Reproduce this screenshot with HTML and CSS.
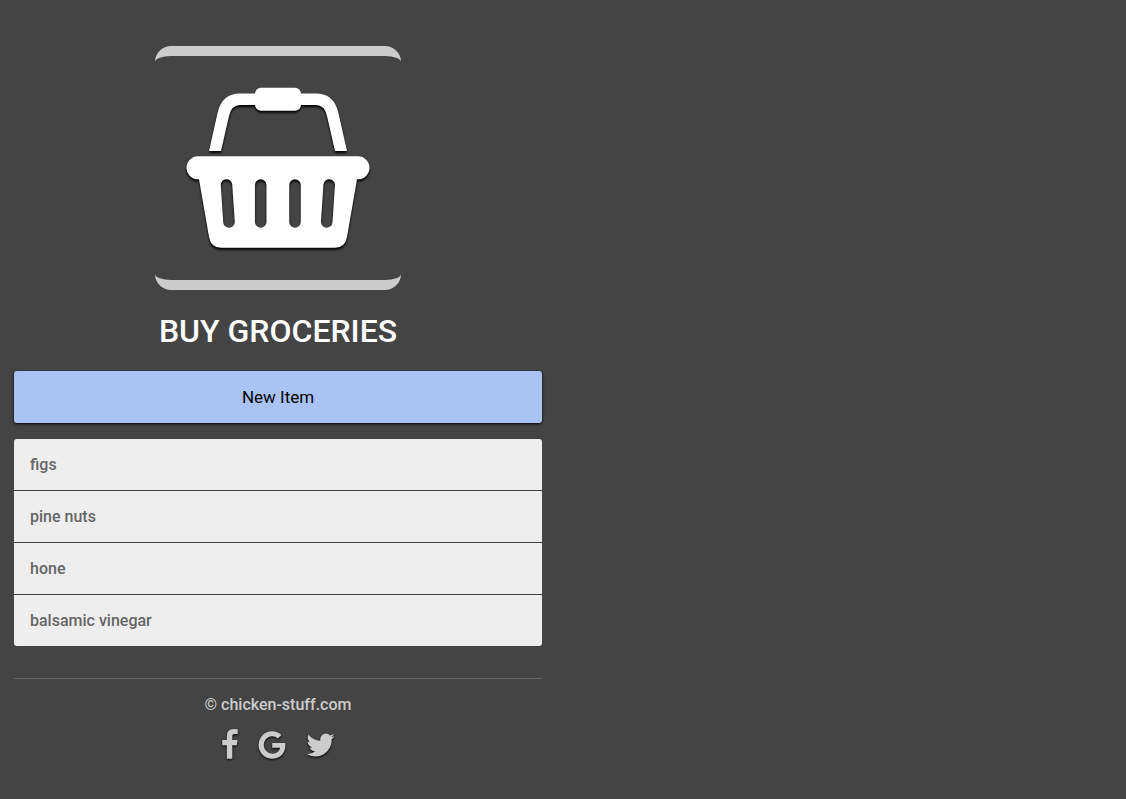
FILE: index.html
```html
<!DOCTYPE html>
<html lang="en">
<head>
<meta charset="utf-8">
<meta name="viewport" content="width=device-width, initial-scale=1">
<title>Buy Groceries</title>
<link rel="stylesheet" href="styles.css">
</head>
<body>
<div class="page">
  <header class="header">
    <div class="logo">
      <svg class="basket" viewBox="186 86 184 164" role="img" aria-label="Shopping basket">
        <mask id="slots" maskUnits="userSpaceOnUse" x="186" y="86" width="184" height="164">
          <rect x="186" y="86" width="184" height="164" fill="#fff"/>
          <path d="M226.500 185L229 222M260.700 185V222M295 185V222M329.200 185L326.700 222" stroke="#000" stroke-width="11.500" stroke-linecap="round"/>
        </mask>
        <g fill="#fff">
          <path d="M209 151L217.800 112Q222.500 93.500 240 93.500H316Q333.500 93.500 338.200 112L347 151H335L327 116Q324.500 105 316 105H240Q231.500 105 229 116L221 151Z"/>
          <rect x="255" y="87.700" width="46" height="23" rx="6"/>
          <path mask="url(#slots)" d="M198 156.300H358A11.500 11.500 0 0 1 358 179.300H357L347 237Q345 247.800 335 247.800H221Q211 247.800 209 237L199 179.300H198A11.500 11.500 0 0 1 198 156.300Z"/>
        </g>
      </svg>
    </div>
    <h1 class="title">BUY GROCERIES</h1>
  </header>
  <main>
    <button class="new-item" type="button">New Item</button>
    <ul class="items">
      <li class="item">figs</li>
      <li class="item">pine nuts</li>
      <li class="item">hone</li>
      <li class="item">balsamic vinegar</li>
    </ul>
  </main>
  <footer class="footer">
    <a class="copyright" href="#">© chicken-stuff.com</a>
    <nav class="social" aria-label="Social media">
      <a class="social-link" href="#" aria-label="Facebook"><svg class="icon" viewBox="464 0 896 1792"><path d="M1343 12v264h-157q-86 0-116 36t-30 108v189h293l-39 296h-254v759h-306v-759h-255v-296h255v-218q0-186 104-288.500t277-102.500q147 0 228 12z"/></svg></a>
      <a class="social-link" href="#" aria-label="Google"><svg class="icon" viewBox="98 0 1568 1792"><path d="M896 786h725q12 67 12 128 0 217-91 387.500t-259.500 266.500-386.500 96q-157 0-299-60.500t-245-163.500-163.500-245-60.500-299 60.500-299 163.500-245 245-163.500 299-60.500q300 0 515 201l-209 201q-123-119-306-119-129 0-238.500 65t-173.500 176.500-64 243.500 64 243.500 173.500 176.500 238.500 65q87 0 160-24t120-60 82-82 51.500-87 22.500-78h-436v-264z"/></svg></a>
      <a class="social-link" href="#" aria-label="Twitter"><svg class="icon" viewBox="84 0 1568 1792"><path d="M1684 408q-67 98-162 167 1 14 1 42 0 130-38 259.500t-115.500 248.500-184.500 210.500-258 146-323 54.500q-271 0-491-145 35 4 78 4 225 0 401-138-105-2-188-64.500t-114-159.500q33 5 61 5 43 0 85-11-112-23-185.500-111.500t-73.500-205.500v-4q68 38 146 41-66-44-105-115t-39-154q0-88 44-163 121 149 294.500 238.500t371.500 99.500q-8-38-8-74 0-134 94.500-228.500t228.500-94.500q140 0 236 102 109-21 205-78-37 115-142 178 93-10 186-50z"/></svg></a>
    </nav>
  </footer>
</div>
</body>
</html>
```
FILE: styles.css
```css
* { box-sizing: border-box; }

body {
  margin: 0;
  background: #444;
  color: #fff;
  font: 16px/20px Roboto, "Liberation Sans", sans-serif;
}

.page {
  width: 50%;
  padding: 46px 21px 36px 14px;
}

.header {
  display: flex;
  flex-direction: column;
  align-items: center;
}

.logo {
  padding: 30px 31px;
  border: solid #ccc;
  border-width: 10px 0;
  border-radius: 16px;
}

.basket {
  display: block;
  width: 184px;
  height: 164px;
  overflow: visible;
  filter: drop-shadow(0 2px 1px #000);
}

.title {
  margin: 21px 0 20px;
  font-size: 32px;
  font-weight: 500;
  line-height: 40px;
}

.new-item {
  display: block;
  width: 100%;
  margin: 0 0 16px;
  padding: 16px;
  border: 0;
  border-radius: 3px;
  background: #a9c3f5;
  box-shadow: 0 1px 3px #000;
  color: #000;
  font: inherit;
  font-size: 17px;
}

.items {
  display: flex;
  flex-direction: column;
  gap: 1px;
  margin: 0;
  padding: 0;
  overflow: hidden;
  border-radius: 3px;
  list-style: none;
}

.item {
  padding: 16px 16px 15px;
  background: #eee;
  color: #666;
  font-weight: 500;
}

.footer {
  display: flex;
  flex-direction: column;
  align-items: center;
  gap: 14px;
  margin-top: 32px;
  padding-top: 16px;
  border-top: 1px solid #666;
}

.copyright {
  color: #ccc;
  font-weight: 500;
  text-decoration: none;
}

.social {
  display: flex;
  gap: 20px;
}

.icon {
  display: block;
  height: 32px;
  overflow: visible;
  fill: #ccc;
  filter: drop-shadow(0 1px 1px #000);
}
```
